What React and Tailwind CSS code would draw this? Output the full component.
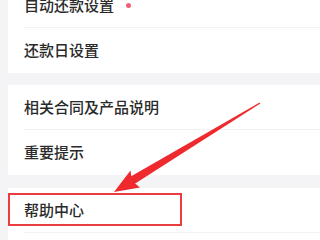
import React from "react";

const font = { fontFamily: '"Noto Sans CJK SC", "Noto Sans", sans-serif' };

function Row({ children, divider = true, extra }) {
  return (
    <div className="relative h-[45px] bg-white flex flex-col">
      <div className="flex-1 flex items-center pl-4 text-[15px] font-medium text-[#2a2a2a]">
        {children}
      </div>
      {divider && <div className="ml-4 h-px bg-[#f2f2f4]" />}
      {extra}
    </div>
  );
}

export default function App() {
  return (
    <div className="relative w-[320px] h-[240px] overflow-hidden bg-[#f4f4f6]" style={font}>
      <div className="flex flex-col pl-2 -mt-[17px]">
        <Row>
          <span>自动还款设置</span>
          <span className="ml-3 w-[5px] h-[5px] rounded-full bg-[#f0607a]" />
        </Row>
        <Row divider={false}>还款日设置</Row>
        <div className="h-[12px]" />
        <Row>相关合同及产品说明</Row>
        <Row divider={false}>重要提示</Row>
        <div className="h-[13px]" />
        <Row
          extra={
            <div className="absolute left-0 top-[5px] w-[174px] h-[33px] border-2 border-[#ea3d42]" />
          }
        >
          帮助中心
        </Row>
        <Row divider={false}>{""}</Row>
      </div>
      <svg className="absolute left-0 top-0" width="320" height="240" viewBox="0 0 320 240">
        <polygon points="130.5,186.5 260.3,103.4 259.7,102.6 125.5,179.5" fill="#ee2a2e" />
        <polygon points="114,192 140,187.5 132,181 130.5,170.5" fill="#ee2a2e" />
      </svg>
    </div>
  );
}
